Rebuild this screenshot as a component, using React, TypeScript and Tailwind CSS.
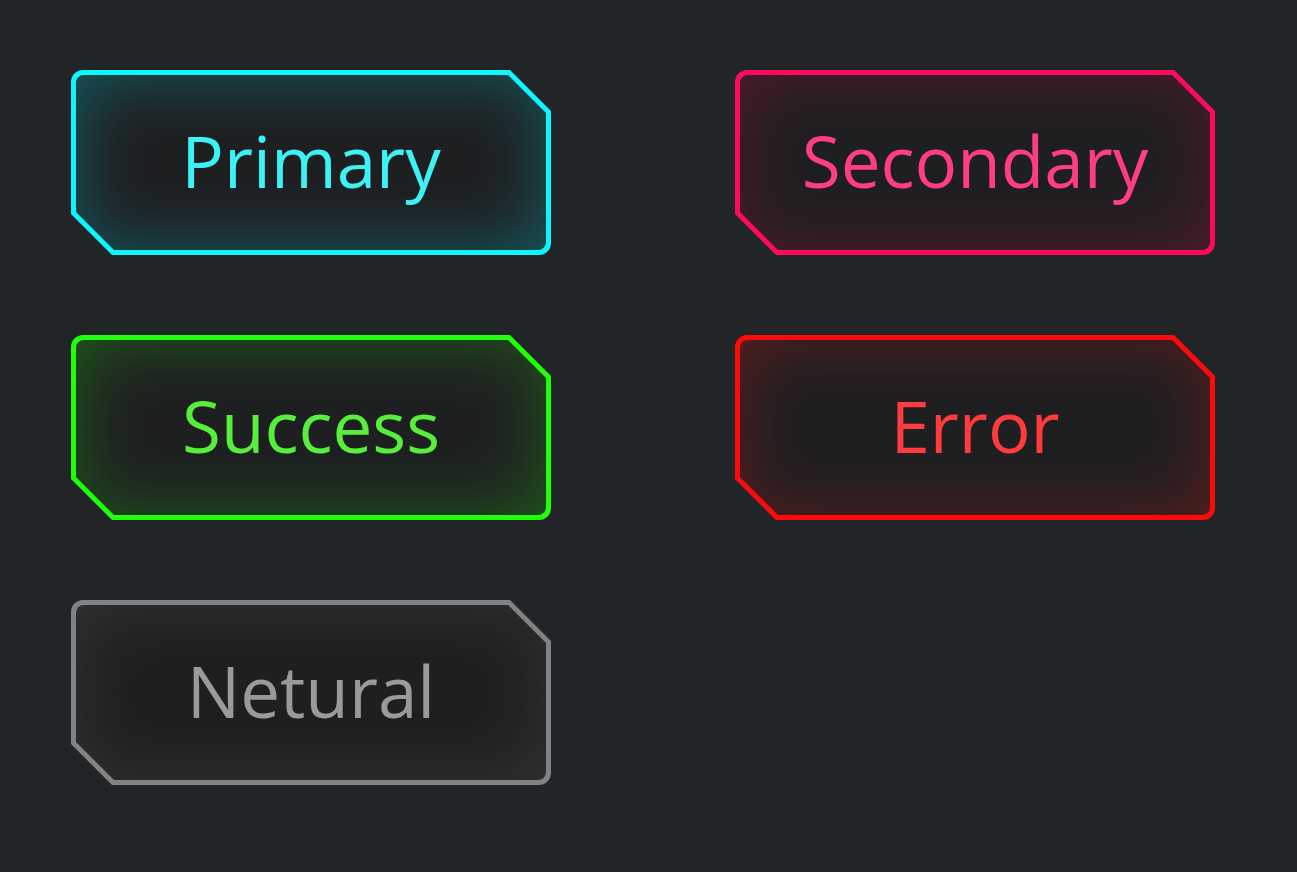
type Variant = {
  label: string;
  border: string;
  fill: string;
  text: string;
};

const variants: Variant[] = [
  {
    label: "Primary",
    border: "bg-[#0ff5ff]",
    fill: "shadow-[inset_0_0_70px_rgba(0,240,255,0.3)]",
    text: "text-[#3cf2f5]",
  },
  {
    label: "Secondary",
    border: "bg-[#ff0a5c]",
    fill: "shadow-[inset_0_0_70px_rgba(255,10,92,0.24)]",
    text: "text-[#ff3d86]",
  },
  {
    label: "Success",
    border: "bg-[#22ff0c]",
    fill: "shadow-[inset_0_0_70px_rgba(40,255,10,0.28)]",
    text: "text-[#58ef3c]",
  },
  {
    label: "Error",
    border: "bg-[#ff0a0a]",
    fill: "shadow-[inset_0_0_70px_rgba(255,20,20,0.28)]",
    text: "text-[#ff3b3f]",
  },
  {
    label: "Netural",
    border: "bg-[#828282]",
    fill: "shadow-[inset_0_0_70px_rgba(150,150,150,0.18)]",
    text: "text-[#9a9a9a]",
  },
];

function CutButton({ label, border, fill, text }: Variant) {
  return (
    <button
      className={`h-[185px] w-[480px] rounded-[12px] p-[5px] [clip-path:polygon(0_0,calc(100%-41px)_0,100%_41px,100%_100%,41px_100%,0_calc(100%-41px))] ${border}`}
    >
      <div
        className={`flex h-full w-full items-center justify-center rounded-[8px] bg-[#1e1f21] [clip-path:polygon(0_0,calc(100%-38px)_0,100%_38px,100%_100%,38px_100%,0_calc(100%-38px))] ${fill}`}
      >
        <span
          className={`pb-[4px] text-[71px] leading-none ${text}`}
          style={{ fontFamily: '"Open Sans", "Noto Sans", sans-serif' }}
        >
          {label}
        </span>
      </div>
    </button>
  );
}

export default function App() {
  return (
    <div className="min-h-[872px] w-full bg-[#222528] pl-[71px] pt-[70px]">
      <div className="grid grid-cols-[480px_480px] gap-x-[184px] gap-y-[80px]">
        {variants.map((v) => (
          <CutButton key={v.label} {...v} />
        ))}
      </div>
    </div>
  );
}
